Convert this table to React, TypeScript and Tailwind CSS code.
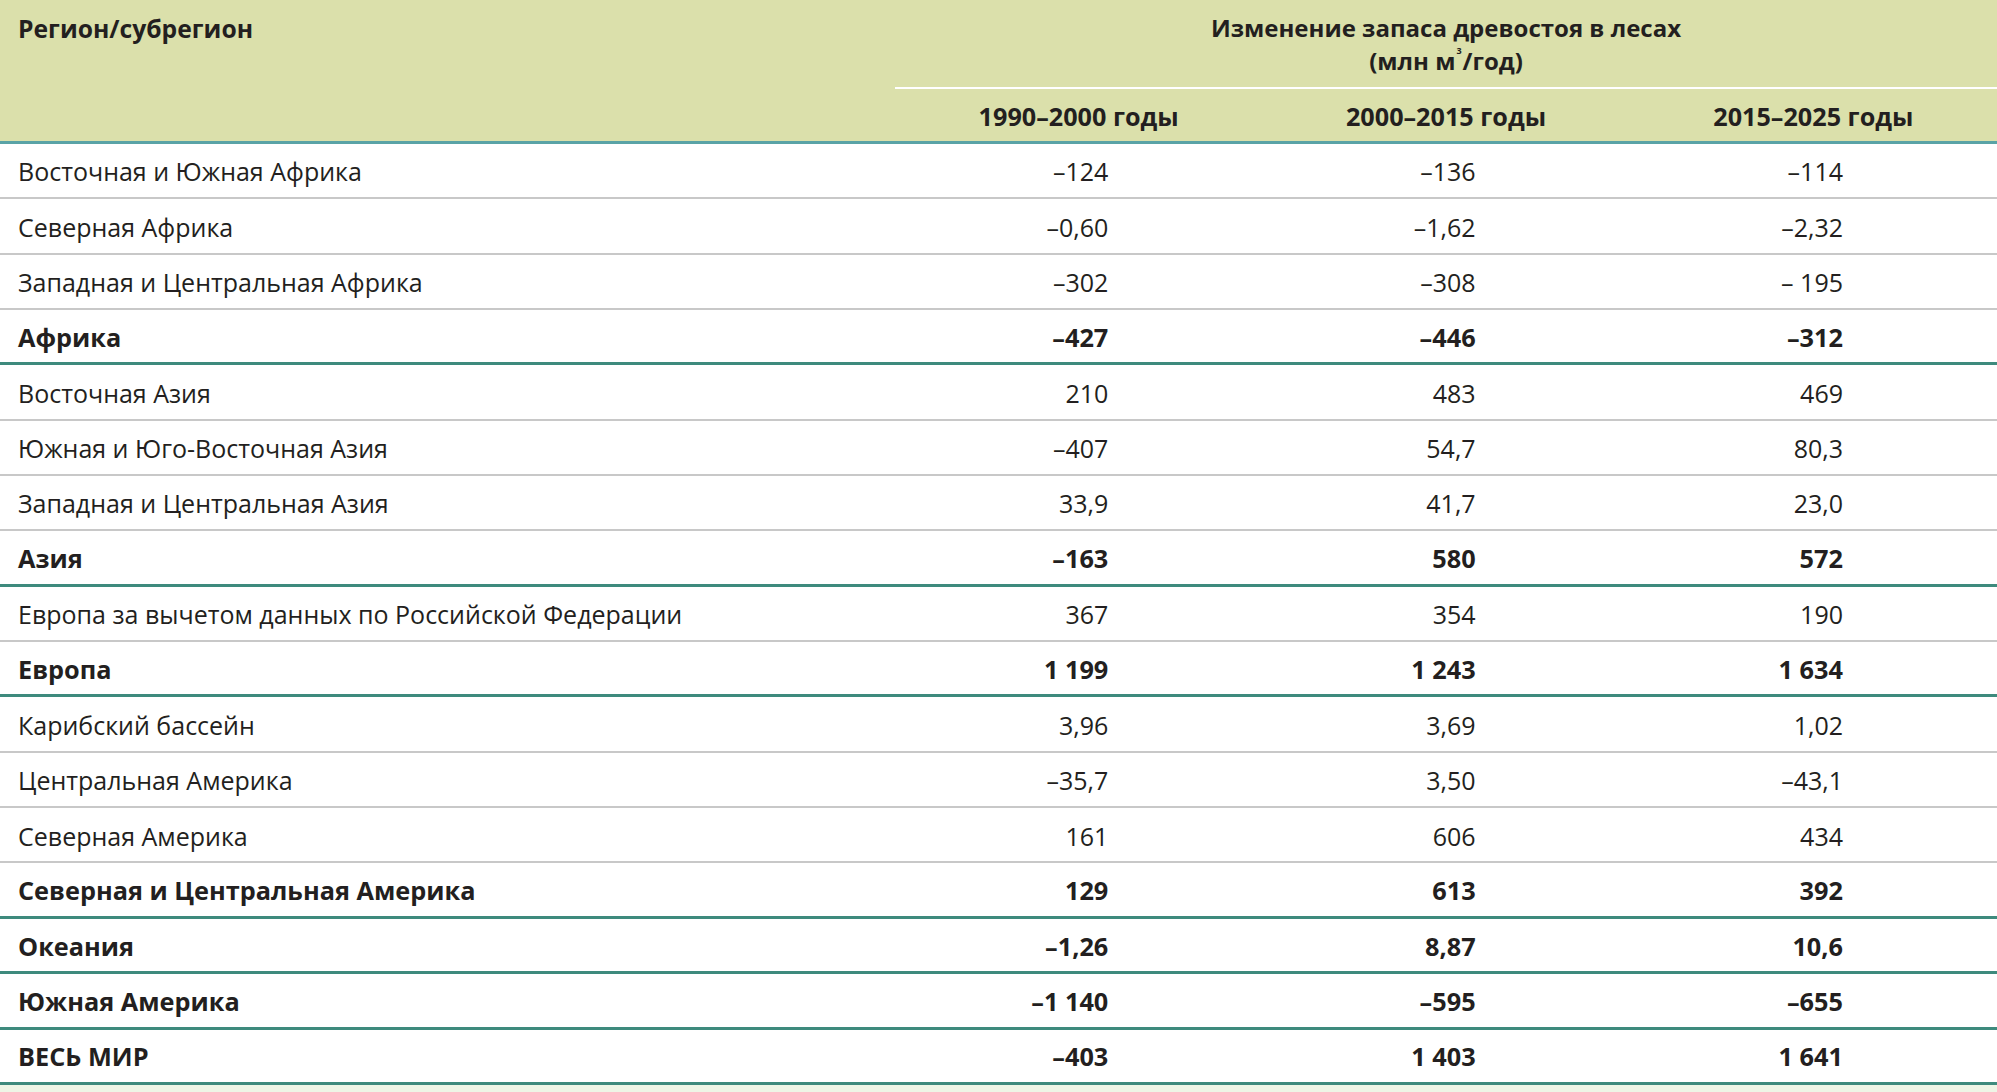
import React from "react";

type Row = { name: string; v: [string, string, string]; bold?: boolean; teal?: boolean };

const rows: Row[] = [
  { name: "Восточная и Южная Африка", v: ["–124", "–136", "–114"] },
  { name: "Северная Африка", v: ["–0,60", "–1,62", "–2,32"] },
  { name: "Западная и Центральная Африка", v: ["–302", "–308", "– 195"] },
  { name: "Африка", v: ["–427", "–446", "–312"], bold: true, teal: true },
  { name: "Восточная Азия", v: ["210", "483", "469"] },
  { name: "Южная и Юго-Восточная Азия", v: ["–407", "54,7", "80,3"] },
  { name: "Западная и Центральная Азия", v: ["33,9", "41,7", "23,0"] },
  { name: "Азия", v: ["–163", "580", "572"], bold: true, teal: true },
  { name: "Европа за вычетом данных по Российской Федерации", v: ["367", "354", "190"] },
  { name: "Европа", v: ["1 199", "1 243", "1 634"], bold: true, teal: true },
  { name: "Карибский бассейн", v: ["3,96", "3,69", "1,02"] },
  { name: "Центральная Америка", v: ["–35,7", "3,50", "–43,1"] },
  { name: "Северная Америка", v: ["161", "606", "434"] },
  { name: "Северная и Центральная Америка", v: ["129", "613", "392"], bold: true, teal: true },
  { name: "Океания", v: ["–1,26", "8,87", "10,6"], bold: true, teal: true },
  { name: "Южная Америка", v: ["–1 140", "–595", "–655"], bold: true, teal: true },
  { name: "ВЕСЬ МИР", v: ["–403", "1 403", "1 641"], bold: true, teal: true },
];

export default function App() {
  return (
    <div
      className="w-[1997px] h-[1092px] bg-[#eef5e6] text-[#231f20] overflow-hidden"
      style={{ fontFamily: '"Open Sans", "Noto Sans", sans-serif' }}
    >
      {/* Header */}
      <div className="h-[144px] bg-[#dbe0ab] border-b-[3px] border-[#5aa3a6] grid grid-cols-[895px_1fr] box-border">
        <div className="pl-[18px] pt-[11px] text-[24.7px] font-bold leading-[36px]">Регион/субрегион</div>
        <div className="flex flex-col">
          <div className="h-[89px] border-b-2 border-white flex flex-col items-center pt-[11px] text-[24px] font-bold leading-[33px]">
            <div>Изменение запаса древостоя в лесах</div>
            <div className="flex items-start">
              <span>(млн м</span>
              <span className="text-[9px] leading-none mt-[2px] ml-[1px] mr-[1px]">3</span>
              <span>/год)</span>
            </div>
          </div>
          <div className="flex-1 grid grid-cols-3 items-center text-[25.2px] font-bold">
            <div className="text-center pt-[3px]">1990–2000 годы</div>
            <div className="text-center pt-[3px]">2000–2015 годы</div>
            <div className="text-center pt-[3px]">2015–2025 годы</div>
          </div>
        </div>
      </div>
      {/* Body */}
      <div className="bg-white">
        {rows.map((r, i) => (
          <div
            key={i}
            className={
              "h-[55.35px] box-border grid grid-cols-[895px_1fr_1fr_1fr] items-center pt-[3px] " +
              (r.teal ? "border-b-[3px] border-[#3e8a7d] " : "border-b-2 border-[#c8c8c8] ") +
              (r.bold ? "font-bold text-[25.3px]" : "font-normal text-[25px]")
            }
          >
            <div className="pl-[18px] whitespace-nowrap">{r.name}</div>
            {r.v.map((x, j) => (
              <div key={j} className="text-right pr-[154px] whitespace-pre">
                {x}
              </div>
            ))}
          </div>
        ))}
      </div>
    </div>
  );
}
